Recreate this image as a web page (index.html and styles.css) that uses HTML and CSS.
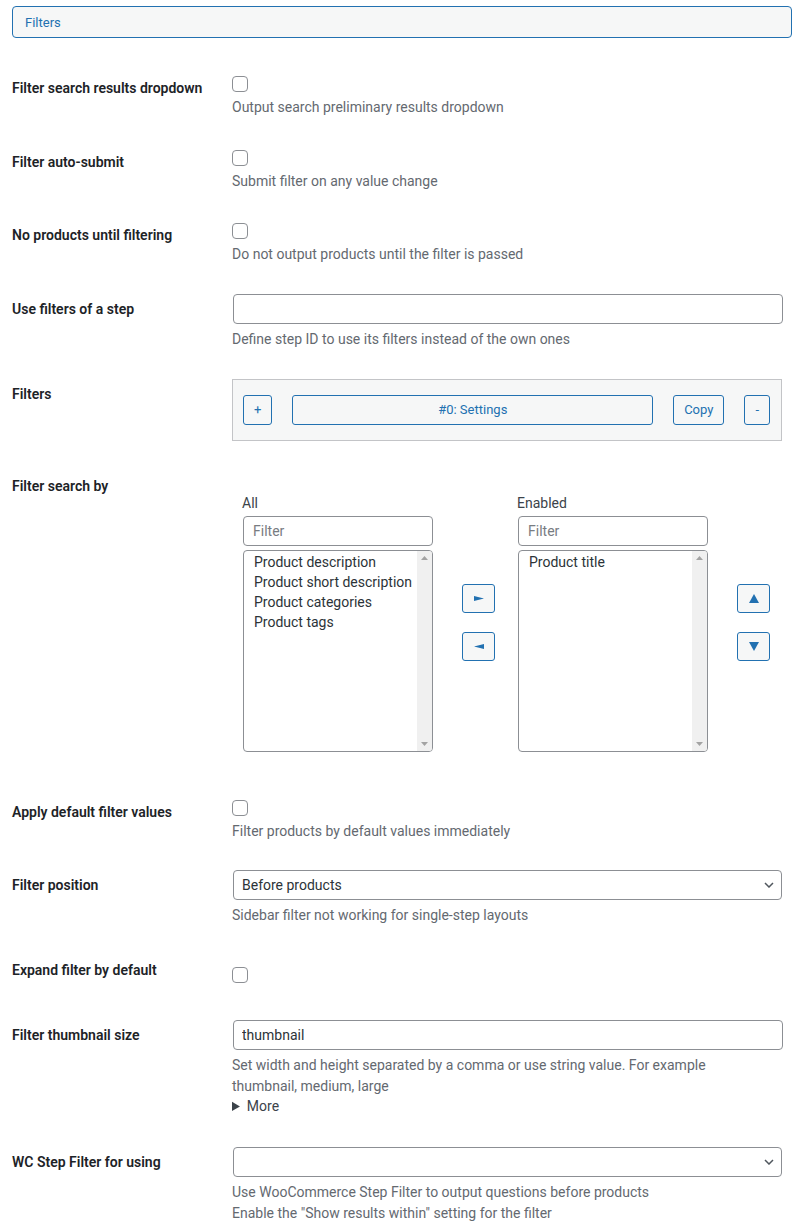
FILE: index.html
```html
<!DOCTYPE html>
<html lang="en">
<head>
<meta charset="utf-8">
<title>Filters</title>
<link rel="stylesheet" href="styles.css">
</head>
<body>
<div class="page">
  <div class="section-toggle">Filters</div>

  <div class="form-table">
    <div class="row">
      <div class="row-label">Filter search results dropdown</div>
      <div class="row-field field-check">
        <input type="checkbox" class="checkbox">
        <p class="description">Output search preliminary results dropdown</p>
      </div>
    </div>

    <div class="row">
      <div class="row-label">Filter auto-submit</div>
      <div class="row-field field-check">
        <input type="checkbox" class="checkbox">
        <p class="description">Submit filter on any value change</p>
      </div>
    </div>

    <div class="row">
      <div class="row-label">No products until filtering</div>
      <div class="row-field field-check">
        <input type="checkbox" class="checkbox">
        <p class="description">Do not output products until the filter is passed</p>
      </div>
    </div>

    <div class="row">
      <div class="row-label">Use filters of a step</div>
      <div class="row-field field-input">
        <input type="text" class="text-input wide-input" value="">
        <p class="description">Define step ID to use its filters instead of the own ones</p>
      </div>
    </div>

    <div class="row">
      <div class="row-label">Filters</div>
      <div class="row-field field-box">
        <div class="repeater">
          <button class="button">+</button>
          <button class="button button-wide">#0: Settings</button>
          <button class="button">Copy</button>
          <button class="button">-</button>
        </div>
      </div>
    </div>

    <div class="row">
      <div class="row-label">Filter search by</div>
      <div class="row-field field-search">
        <div class="dual-list">
          <div class="list-col">
            <div class="list-title">All</div>
            <input type="text" class="text-input filter-input" placeholder="Filter">
            <div class="listbox">
              <div class="list-items">
                <div>Product description</div>
                <div>Product short description</div>
                <div>Product categories</div>
                <div>Product tags</div>
              </div>
              <div class="scrollbar">
                <svg width="7" height="4" viewBox="0 0 7 4"><polygon points="3.5,0 7,4 0,4" fill="#a3a3a3"/></svg>
                <svg width="7" height="4" viewBox="0 0 7 4"><polygon points="0,0 7,0 3.5,4" fill="#a3a3a3"/></svg>
              </div>
            </div>
          </div>

          <div class="move-buttons move-swap">
            <button class="icon-button"><svg width="10" height="5" viewBox="0 0 10 5"><polygon points="0,0 10,2.5 0,5" fill="#2271b1"/></svg></button>
            <button class="icon-button"><svg width="10" height="5" viewBox="0 0 10 5"><polygon points="10,0 0,2.5 10,5" fill="#2271b1"/></svg></button>
          </div>

          <div class="list-col">
            <div class="list-title">Enabled</div>
            <input type="text" class="text-input filter-input" placeholder="Filter">
            <div class="listbox">
              <div class="list-items">
                <div>Product title</div>
              </div>
              <div class="scrollbar">
                <svg width="7" height="4" viewBox="0 0 7 4"><polygon points="3.5,0 7,4 0,4" fill="#a3a3a3"/></svg>
                <svg width="7" height="4" viewBox="0 0 7 4"><polygon points="0,0 7,0 3.5,4" fill="#a3a3a3"/></svg>
              </div>
            </div>
          </div>

          <div class="move-buttons move-order">
            <button class="icon-button"><svg width="10" height="9" viewBox="0 0 10 9"><polygon points="5,0 10,9 0,9" fill="#2271b1"/></svg></button>
            <button class="icon-button"><svg width="10" height="9" viewBox="0 0 10 9"><polygon points="0,0 10,0 5,9" fill="#2271b1"/></svg></button>
          </div>
        </div>
      </div>
    </div>

    <div class="row">
      <div class="row-label">Apply default filter values</div>
      <div class="row-field field-check">
        <input type="checkbox" class="checkbox">
        <p class="description">Filter products by default values immediately</p>
      </div>
    </div>

    <div class="row">
      <div class="row-label">Filter position</div>
      <div class="row-field field-input">
        <div class="select-wrap">
          <select class="select">
            <option>Before products</option>
          </select>
          <svg class="chevron" width="10" height="6" viewBox="0 0 10 6"><path d="M1 1 L5 5 L9 1" fill="none" stroke="#50575e" stroke-width="1.5"/></svg>
        </div>
        <p class="description">Sidebar filter not working for single-step layouts</p>
      </div>
    </div>

    <div class="row">
      <div class="row-label">Expand filter by default</div>
      <div class="row-field field-check-only">
        <input type="checkbox" class="checkbox">
      </div>
    </div>

    <div class="row">
      <div class="row-label">Filter thumbnail size</div>
      <div class="row-field field-input field-more">
        <input type="text" class="text-input wide-input" value="thumbnail">
        <p class="description">Set width and height separated by a comma or use string value. For example<br>thumbnail, medium, large</p>
        <details class="more">
          <summary>More</summary>
        </details>
      </div>
    </div>

    <div class="row">
      <div class="row-label">WC Step Filter for using</div>
      <div class="row-field field-input">
        <div class="select-wrap">
          <select class="select">
            <option></option>
          </select>
          <svg class="chevron" width="10" height="6" viewBox="0 0 10 6"><path d="M1 1 L5 5 L9 1" fill="none" stroke="#50575e" stroke-width="1.5"/></svg>
        </div>
        <p class="description">Use WooCommerce Step Filter to output questions before products<br>Enable the "Show results within" setting for the filter</p>
      </div>
    </div>
  </div>
</div>
</body>
</html>
```
FILE: styles.css
```css
* { box-sizing: border-box; }

body {
  margin: 0;
  font-family: Roboto, "Liberation Sans", sans-serif;
  font-size: 14px;
  color: #3c434a;
  background: #fff;
}

.page {
  padding: 6px 8px 0 12px;
}

.section-toggle {
  display: flex;
  align-items: center;
  height: 32px;
  padding: 0 12px;
  border: 1px solid #2271b1;
  border-radius: 4px;
  background: #f6f7f7;
  color: #2271b1;
  font-size: 13px;
}

.form-table {
  margin-top: 21px;
}

.row {
  display: grid;
  grid-template-columns: 210px 1fr;
}

.row-label {
  padding: 20px 10px 20px 0;
  font-weight: 600;
  line-height: 1.3;
  color: #1d2327;
}

.row-field {
  padding: 15px 10px;
  min-width: 0;
}

.field-check {
  padding: 15px 10px 14.5px;
}

.field-input {
  padding: 14px 10px 15px;
}

.field-box {
  padding: 14px 10px 16px;
}

.field-search {
  padding: 15px 10px;
}

.field-check-only {
  padding: 24px 10px 23px;
}

.field-more {
  padding-bottom: 17px;
}

.checkbox {
  appearance: none;
  -webkit-appearance: none;
  display: block;
  width: 16px;
  height: 16px;
  margin: 2px 0 0;
  border: 1px solid #8c8f94;
  border-radius: 4px;
  background: #fff;
}

.description {
  margin: 5px 0 0;
  line-height: 21px;
  color: #646970;
}

.text-input {
  display: block;
  width: 100%;
  height: 30px;
  margin: 0;
  padding: 0 8px;
  border: 1px solid #8c8f94;
  border-radius: 4px;
  background: #fff;
  font-family: inherit;
  font-size: 14px;
  color: #2c3338;
  outline: none;
}

.wide-input {
  margin-left: 1px;
}

.text-input::placeholder {
  color: #787c82;
}

.repeater {
  display: flex;
  gap: 20px;
  padding: 15px 11px 15px 10px;
  border: 1px solid #c3c4c7;
  background: #f6f7f7;
}

.button {
  height: 30px;
  margin: 0;
  padding: 0 10px;
  border: 1px solid #2271b1;
  border-radius: 3px;
  background: #f6f7f7;
  color: #2271b1;
  font-family: inherit;
  font-size: 13px;
  line-height: 28px;
}

.button-wide {
  flex: 1;
}

.dual-list {
  display: flex;
  padding: 21px 0 16px 11px;
}

.list-col {
  width: 190px;
  display: flex;
  flex-direction: column;
}

.list-title {
  line-height: 21px;
  color: #3c434a;
  margin-left: -1px;
}

.filter-input {
  margin-top: 2px;
  padding: 0 9px;
}

.listbox {
  display: flex;
  height: 202px;
  margin-top: 4px;
  border: 1px solid #8c8f94;
  border-radius: 4px;
  background: #fff;
  overflow: hidden;
}

.list-items {
  flex: 1;
  padding-left: 10px;
  padding-top: 1px;
  line-height: 20px;
  color: #2c3338;
  white-space: nowrap;
}

.scrollbar {
  width: 15px;
  background: #f0f0f0;
  display: flex;
  flex-direction: column;
  justify-content: space-between;
  align-items: center;
  padding: 5px 0 5px;
}

.scrollbar svg {
  display: block;
}

.move-buttons {
  display: flex;
  flex-direction: column;
  gap: 19px;
  align-self: center;
}

.move-swap {
  margin: 0 23px 0 29px;
}

.move-order {
  margin-left: 29px;
}

.icon-button {
  display: flex;
  align-items: center;
  justify-content: center;
  width: 33px;
  height: 29px;
  margin: 0;
  padding: 0;
  border: 1px solid #2271b1;
  border-radius: 3px;
  background: #f6f7f7;
}

.icon-button svg {
  display: block;
}

.select-wrap {
  display: grid;
  margin-left: 1px;
}

.select {
  grid-area: 1 / 1;
  appearance: none;
  -webkit-appearance: none;
  width: 100%;
  height: 30px;
  margin: 0;
  padding: 0 24px 0 8px;
  border: 1px solid #8c8f94;
  border-radius: 4px;
  background: #fff;
  font-family: inherit;
  font-size: 14px;
  color: #2c3338;
}

.chevron {
  grid-area: 1 / 1;
  justify-self: end;
  align-self: center;
  margin-right: 8px;
  pointer-events: none;
}

.more {
  line-height: 20px;
  color: #3c434a;
  margin-top: -1px;
}

.more summary {
  cursor: pointer;
}
```
